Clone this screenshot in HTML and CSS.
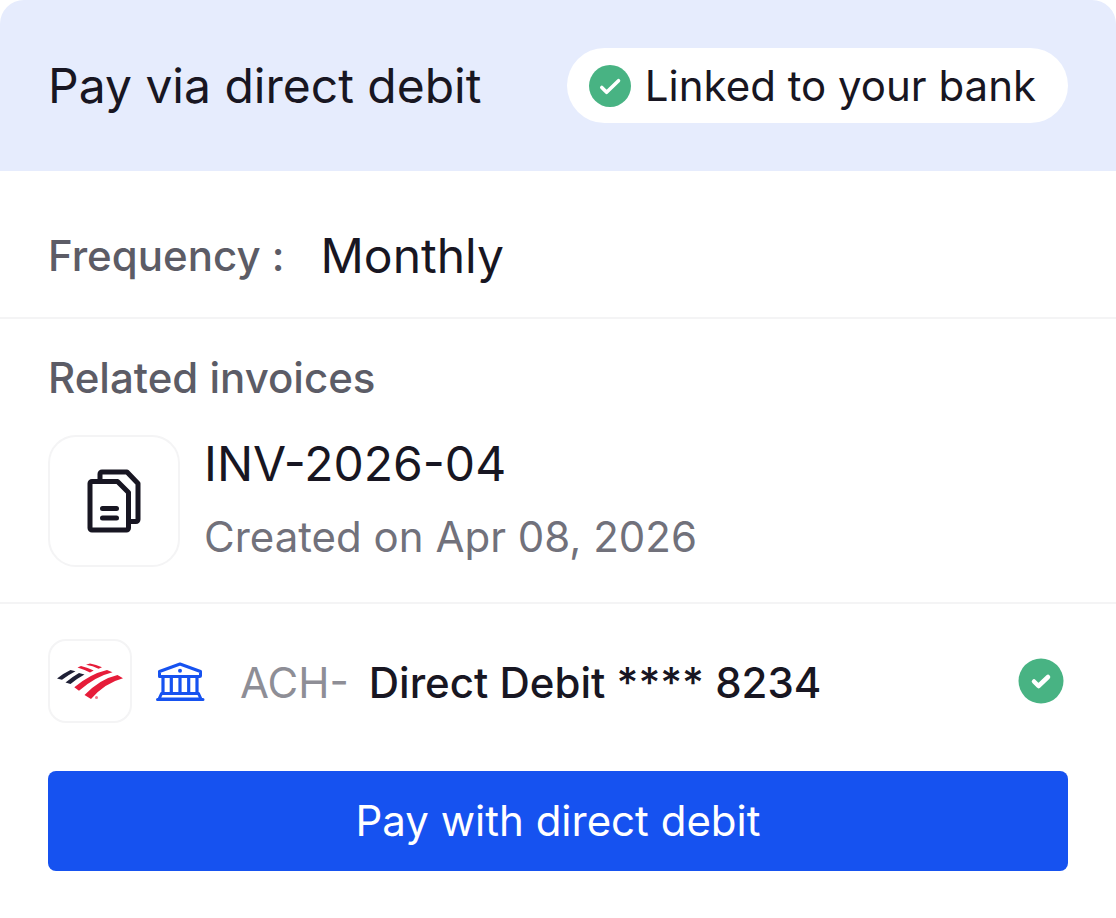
FILE: index.html
```html
<!DOCTYPE html>
<html lang="en">
<head>
  <meta charset="UTF-8" />
  <title>Pay via direct debit</title>
  <meta name="viewport" content="width=device-width, initial-scale=1.0" />
  <link rel="stylesheet" href="styles.css">
</head>
<body>
  <main class="card">
    <header class="card-header">
      <h1>Pay via direct debit</h1>
      <div class="pill">
        <svg class="pill-check" viewBox="0 0 42 42" aria-hidden="true">
          <circle cx="21" cy="21" r="21" fill="#48B383"/>
          <path d="M12.800 22.500l4.800 4.800L29.500 15.700" fill="none" stroke="#fff" stroke-width="3.600" stroke-linecap="round" stroke-linejoin="round"/>
        </svg>
        <span>Linked to your bank</span>
      </div>
    </header>

    <section class="frequency">
      <span class="label">Frequency :</span>
      <span class="value">Monthly</span>
    </section>

    <section class="invoices">
      <h2 class="label">Related invoices</h2>
      <div class="invoice">
        <div class="tile">
          <svg class="docs-icon" viewBox="0 0 54 64" fill="none" stroke="#181622" stroke-width="5" stroke-linecap="round" stroke-linejoin="round" aria-hidden="true">
            <path d="M13 11V5a2 2 0 0 1 2-2H40L51 14.500V50.500a2 2 0 0 1-2 2H43" stroke-linecap="butt"/>
            <path d="M5 12.500H30.500L41.500 23.500V59a2 2 0 0 1-2 2H5a2 2 0 0 1-2-2V14.500a2 2 0 0 1 2-2z"/>
            <path d="M15.500 39.500h14M15.500 49h14"/>
          </svg>
        </div>
        <div>
          <div class="value">INV-2026-04</div>
          <div class="created">Created on Apr 08, 2026</div>
        </div>
      </div>
    </section>

    <section class="payment">
      <div class="method">
        <div class="tile tile-small">
          <svg class="bank-logo" viewBox="0 0 66 38" aria-hidden="true">
            <g fill="#1F2036">
              <path d="M0 16.500Q7 11 13.500 8l5 1.200Q12 12.500 5 17.700z"/>
              <path d="M8.500 20.500Q15 15 22 11l5.500 1.500Q20 16.500 13.500 22z"/>
            </g>
            <g fill="#E61C39">
              <path d="M20.500 5.500L24 4q7 1.500 12.700 4.500l-3.700 2Q27 7.500 20.500 5.500z"/>
              <path d="M29 2.800L33 1.500q6 1 12 3.800l-3.500 1.500Q36 4 29 2.800z"/>
              <path d="M17.300 25.300Q33 12 50 8l5.500 2.200Q38 14.500 22 28.800z"/>
              <path d="M27.500 33Q43 17 60.500 13l5.500 3.300Q48 21 34 37z"/>
              <circle cx="39.500" cy="35.500" r="1.500" fill-opacity=".6"/>
            </g>
          </svg>
        </div>
        <svg class="bank-icon" viewBox="0 0 50 40" fill="none" stroke="#1652F0" stroke-width="3" stroke-linecap="round" stroke-linejoin="round" aria-hidden="true">
          <path d="M3.500 15.500V10.500L24 3l20.500 7.500v4a1 1 0 0 1-1 1H4.500a1 1 0 0 1-1-1z"/>
          <circle cx="24" cy="9.700" r="2" fill="#1652F0" stroke="none"/>
          <path d="M7 16v15M15.300 16v15M24 16v15M32.700 16v15M41 16v15" stroke-width="3.200"/>
          <path d="M5.500 32.500h37l2.500 5.500H3zM1.500 38.500h45.500"/>
        </svg>
        <span class="method-type">ACH-</span>
        <span class="method-name">Direct Debit **** 8234</span>
        <svg class="selected" viewBox="0 0 46 46" role="img" aria-label="Selected">
          <circle cx="23" cy="23" r="22.500" fill="#48B383"/>
          <path d="M16 23.500l4.500 4.500 9.500-9" fill="none" stroke="#fff" stroke-width="4.500" stroke-linecap="round" stroke-linejoin="round"/>
        </svg>
      </div>
      <button type="button" class="pay-btn">Pay with direct debit</button>
    </section>
  </main>
</body>
</html>
```
FILE: styles.css
```css
* {
  box-sizing: border-box;
}
body {
  margin: 0;
  background: #fff;
  color: #181622;
  font-family: Inter, sans-serif;
}
h1, h2 {
  margin: 0;
}
svg {
  display: block;
  flex: none;
}
.card {
  background: #fff;
  border-radius: 24px;
  overflow: hidden;
}
.card-header {
  display: flex;
  align-items: center;
  justify-content: space-between;
  padding: 48px;
  background: #E6ECFD;
}
h1, .value {
  font-size: 48px;
  line-height: 58px;
  font-weight: 400;
}
.pill {
  display: flex;
  align-items: center;
  gap: 14px;
  padding: 13px 32px 12px 22px;
  border-radius: 38px;
  background: #fff;
  font-size: 42px;
  line-height: 50px;
}
.pill-check {
  width: 42px;
  height: 42px;
}
.label {
  color: #5C5C66;
  font-size: 42px;
  line-height: 50px;
  font-weight: 500;
}
.frequency {
  display: flex;
  align-items: center;
  gap: 36px;
  padding: 56px 48px 32px;
  border-bottom: 2px solid #F4F4F5;
}
.invoices {
  padding: 34px 48px 35px;
  border-bottom: 2px solid #F4F4F5;
}
.invoice {
  display: flex;
  gap: 24px;
  margin-top: 32px;
}
.tile {
  display: flex;
  align-items: center;
  justify-content: center;
  flex: none;
  width: 132px;
  height: 132px;
  border: 2px solid #F4F4F5;
  border-radius: 28px;
}
.tile-small {
  width: 84px;
  height: 84px;
  border-radius: 18px;
}
.docs-icon {
  width: 54px;
  height: 64px;
}
.created {
  margin-top: 19px;
  color: #71717B;
  font-size: 42px;
  line-height: 50px;
}
.payment {
  padding: 35px 48px 47px;
}
.method {
  display: flex;
  align-items: center;
  gap: 24px;
  font-size: 42px;
  line-height: 50px;
}
.bank-logo {
  width: 66px;
  height: 38px;
}
.bank-icon {
  width: 50px;
  height: 40px;
}
.method-type, .method-name {
  padding-top: 3px;
}
.method-type {
  margin: 0 -4px 0 10px;
  color: #8E8E96;
}
.method-name {
  font-weight: 500;
}
.selected {
  width: 46px;
  height: 46px;
  margin-left: auto;
  margin-right: 4px;
}
.pay-btn {
  display: block;
  width: 100%;
  margin-top: 48px;
  padding: 25px;
  border: none;
  border-radius: 8px;
  background: #1652F0;
  color: #fff;
  font-family: inherit;
  font-size: 42px;
  line-height: 50px;
  cursor: pointer;
}
```
